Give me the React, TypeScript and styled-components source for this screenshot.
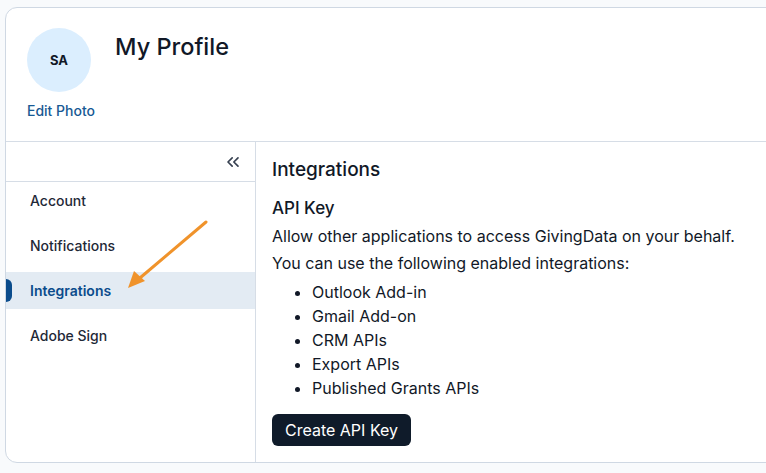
import React from 'react';
import styled, { createGlobalStyle } from 'styled-components';
import { ChevronsLeft } from 'lucide-react';

const GlobalStyle = createGlobalStyle`
  html, body {
    margin: 0;
    padding: 0;
    background: #f8fafc;
    overflow: hidden;
  }
  body {
    font-family: Inter, "Noto Sans", sans-serif;
    color: #111827;
  }
`;

const Page = styled.div`
  position: relative;
  width: 766px;
  height: 473px;
  padding: 7px 0 0 5px;
  box-sizing: border-box;
  overflow: hidden;
`;

const Card = styled.div`
  width: calc(100% + 20px);
  height: 456px;
  box-sizing: border-box;
  background: #fff;
  border: 1px solid #cfd8e3;
  border-radius: 12px;
  display: flex;
  flex-direction: column;
  overflow: hidden;
`;

const Header = styled.header`
  display: flex;
  align-items: flex-start;
  gap: 20px;
  height: 134px;
  box-sizing: border-box;
  padding: 20px 0 0 21px;
  border-bottom: 1px solid #d6dde6;
`;

const AvatarBlock = styled.div`
  display: flex;
  flex-direction: column;
  align-items: flex-start;
`;

const Avatar = styled.div`
  width: 64px;
  height: 64px;
  border-radius: 50%;
  background: #dbeefe;
  display: flex;
  align-items: center;
  justify-content: center;
  font-size: 13px;
  font-weight: 700;
  color: #111827;
`;

const EditPhoto = styled.a`
  margin-top: 9px;
  font-size: 14px;
  font-weight: 500;
  color: #185a94;
  text-decoration: none;
  line-height: 20px;
`;

const Title = styled.h1`
  margin: 4px 0 0;
  font-size: 23.5px;
  font-weight: 500;
  line-height: 30px;
  color: #111827;
`;

const Body = styled.div`
  flex: 1;
  display: flex;
`;

const Sidebar = styled.nav`
  width: 249px;
  flex-shrink: 0;
  border-right: 1px solid #d6dde6;
  display: flex;
  flex-direction: column;
`;

const CollapseRow = styled.div`
  height: 40px;
  box-sizing: border-box;
  border-bottom: 1px solid #d6dde6;
  display: flex;
  align-items: center;
  justify-content: flex-end;
  padding-right: 12px;
  color: #374151;
`;

const NavList = styled.ul`
  list-style: none;
  margin: 0;
  padding: 0;
  display: flex;
  flex-direction: column;
  gap: 8px;
`;

const NavItem = styled.li<{ $active?: boolean }>`
  position: relative;
  height: 37px;
  display: flex;
  align-items: center;
  padding-left: 24px;
  font-size: 14px;
  font-weight: ${({ $active }) => ($active ? 600 : 500)};
  color: ${({ $active }) => ($active ? '#0b4c8c' : '#1f2937')};
  background: ${({ $active }) => ($active ? '#e3ebf3' : 'transparent')};
`;

const ActiveMark = styled.span`
  position: absolute;
  left: -1px;
  top: 7px;
  width: 7px;
  height: 23px;
  border-radius: 0 6px 6px 0;
  background: #0b4c8c;
`;

const Content = styled.section`
  flex: 1;
  padding: 14px 16px 0;
`;

const SectionTitle = styled.h2`
  margin: 0;
  font-size: 19px;
  font-weight: 500;
  line-height: 28px;
`;

const SubTitle = styled.h3`
  margin: 12px 0 0;
  font-size: 17px;
  font-weight: 500;
  line-height: 24px;
`;

const Para = styled.p<{ $gap: number }>`
  margin: ${({ $gap }) => $gap}px 0 0;
  font-size: 16px;
  line-height: 24px;
`;

const List = styled.ul`
  margin: 5px 0 0;
  padding-left: 40px;
  font-size: 16px;
  line-height: 24px;
`;

const Button = styled.button`
  margin-top: 14px;
  height: 32px;
  padding: 0 13px;
  border: none;
  border-radius: 6px;
  background: #0f1b2a;
  color: #fff;
  font-family: Inter, "Noto Sans", sans-serif;
  font-size: 16px;
  cursor: pointer;
`;

const Arrow = styled.svg`
  position: absolute;
  left: 120px;
  top: 215px;
  pointer-events: none;
`;

const navItems = ['Account', 'Notifications', 'Integrations', 'Adobe Sign'];
const integrations = ['Outlook Add-in', 'Gmail Add-on', 'CRM APIs', 'Export APIs', 'Published Grants APIs'];

const App: React.FC = () => {
  return (
    <>
      <GlobalStyle />
      <Page>
        <Card>
          <Header>
            <AvatarBlock>
              <Avatar>SA</Avatar>
              <EditPhoto href="#">Edit Photo</EditPhoto>
            </AvatarBlock>
            <Title>My Profile</Title>
          </Header>
          <Body>
            <Sidebar>
              <CollapseRow>
                <ChevronsLeft size={20} strokeWidth={2} />
              </CollapseRow>
              <NavList>
                {navItems.map((item) => (
                  <NavItem key={item} $active={item === 'Integrations'}>
                    {item === 'Integrations' && <ActiveMark />}
                    {item}
                  </NavItem>
                ))}
              </NavList>
            </Sidebar>
            <Content>
              <SectionTitle>Integrations</SectionTitle>
              <SubTitle>API Key</SubTitle>
              <Para $gap={4}>Allow other applications to access GivingData on your behalf.</Para>
              <Para $gap={3}>You can use the following enabled integrations:</Para>
              <List>
                {integrations.map((i) => (
                  <li key={i}>{i}</li>
                ))}
              </List>
              <Button>Create API Key</Button>
            </Content>
          </Body>
        </Card>
        <Arrow width="95" height="80" viewBox="0 0 95 80">
          <line x1="86" y1="7" x2="14" y2="68" stroke="#f0932b" strokeWidth="3" strokeLinecap="round" />
          <polygon points="8,73 14,56 25,66" fill="#f0932b" />
        </Arrow>
      </Page>
    </>
  );
};

export default App;
